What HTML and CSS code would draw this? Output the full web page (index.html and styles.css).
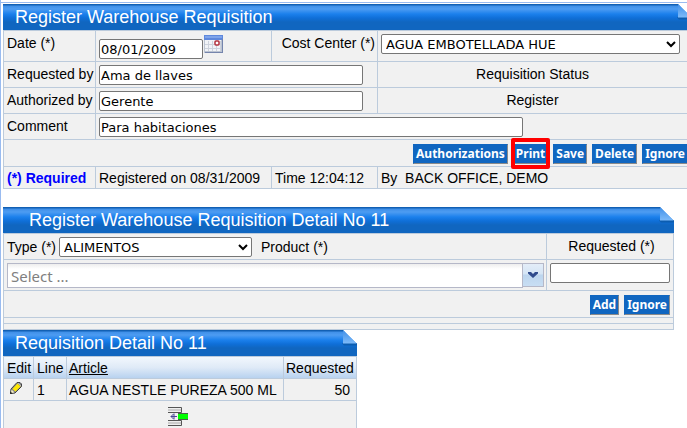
FILE: index.html
```html
<!DOCTYPE html>
<html lang="en">
<head>
<meta charset="UTF-8">
<meta name="viewport" content="width=device-width, initial-scale=1">
<title>Warehouse Requisition</title>
<link rel="stylesheet" href="styles.css">
</head>
<body>
<svg class="defs" width="0" height="0" aria-hidden="true">
  <defs>
    <linearGradient id="foldFill" x1="0" y1="0" x2="0" y2="1">
      <stop offset="0" stop-color="#3f8fe8"/>
      <stop offset="1" stop-color="#7dbaf9"/>
    </linearGradient>
    <symbol id="fold" viewBox="0 0 16 16">
      <path d="M2 0H16V14Z" fill="#fff"/>
      <path d="M1 13.500L3 15.500H16V13H2Z" fill="#0b559f" opacity=".7"/>
      <path d="M2 0V13.500H15.500Z" fill="url(#foldFill)"/>
    </symbol>
  </defs>
</svg>

<main class="page">
  <form class="panel requisition">
    <h1 class="title">Register Warehouse Requisition<svg class="fold"><use href="#fold"/></svg></h1>
    <div class="row first">
      <div class="cell"><label for="date">Date (*)</label></div>
      <div class="cell date-cell">
        <input type="text" id="date" class="date" value="08/01/2009">
        <button type="button" class="calendar" aria-label="Calendar">
          <svg width="19" height="18" viewBox="0 0 19 18">
            <rect x="0" y="0" width="19" height="18" fill="#bcc4d2"/>
            <rect x="1" y="5" width="16" height="11" fill="#f1f3f7"/>
            <rect x="0" y="0" width="19" height="5" fill="#5f88dc"/>
            <rect x="1" y="1" width="17" height="2" fill="#7fa4ea"/>
            <path d="M4.500 6v10M8.500 6v10M12.500 6v10M16.500 6v10M1 9.500h16M1 13.500h16" stroke="#cdd2dc"/>
            <path d="M18.500 4v14M1 17.500h18" stroke="#7585ad"/>
            <rect x="11" y="6" width="4" height="4" rx="1" fill="#fff" stroke="#b2303c" stroke-width="1.500"/>
          </svg>
        </button>
      </div>
      <div class="cell cost-label"><label for="cost">Cost Center (*)</label></div>
      <div class="cell cost-cell"><select id="cost" class="cost"><option>AGUA EMBOTELLADA HUE</option></select></div>
    </div>
    <div class="row">
      <div class="cell"><label for="requestedBy">Requested by</label></div>
      <div class="cell field wide"><input type="text" id="requestedBy" class="person" value="Ama de llaves"></div>
      <div class="cell status">Requisition Status</div>
    </div>
    <div class="row">
      <div class="cell"><label for="authorizedBy">Authorized by</label></div>
      <div class="cell field wide"><input type="text" id="authorizedBy" class="person" value="Gerente"></div>
      <div class="cell status">Register</div>
    </div>
    <div class="row">
      <div class="cell"><label for="comment">Comment</label></div>
      <div class="cell field full"><input type="text" id="comment" class="comment" value="Para habitaciones"></div>
    </div>
    <div class="actions">
      <button type="button" class="btn">Authorizations</button>
      <button type="button" class="btn marked">Print</button>
      <button type="button" class="btn">Save</button>
      <button type="button" class="btn">Delete</button>
      <button type="button" class="btn">Ignore</button>
    </div>
    <div class="row info">
      <div class="cell required">(*) Required</div>
      <div class="cell">Registered on 08/31/2009</div>
      <div class="cell">Time 12:04:12</div>
      <div class="cell">By &nbsp;BACK OFFICE, DEMO</div>
    </div>
  </form>

  <form class="panel entry">
    <h2 class="title indent">Register Warehouse Requisition Detail No 11<svg class="fold"><use href="#fold"/></svg></h2>
    <div class="entry-row">
      <div class="cell type-cell">
        <label for="type">Type (*)</label>
        <select id="type" class="type"><option>ALIMENTOS</option></select>
        <label for="product">Product (*)</label>
      </div>
      <div class="cell requested-label"><label for="requested">Requested (*)</label></div>
    </div>
    <div class="entry-row fields">
      <div class="cell combo-cell">
        <div class="combo">
          <input type="text" id="product" placeholder="Select ...">
          <button type="button" aria-label="Open list">
            <svg width="12" height="8" viewBox="0 0 12 8"><path d="M1 1H4L6 3L8 1H11V2.500L6 7L1 2.500Z" fill="#2f4a8c"/></svg>
          </button>
        </div>
      </div>
      <div class="cell amount-cell"><input type="text" id="requested" class="amount"></div>
    </div>
    <div class="actions">
      <button type="button" class="btn">Add</button>
      <button type="button" class="btn">Ignore</button>
    </div>
    <div class="strip"></div>
    <div class="strip"></div>
  </form>

  <section class="panel detail">
    <h2 class="title">Requisition Detail No 11<svg class="fold"><use href="#fold"/></svg></h2>
    <table class="lines">
      <thead>
        <tr><th class="edit">Edit</th><th class="line">Line</th><th><a href="#">Article</a></th><th class="qty">Requested</th></tr>
      </thead>
      <tbody>
        <tr>
          <td>
            <button type="button" class="icon" aria-label="Edit line">
              <svg width="14" height="14" viewBox="0 0 14 14">
                <path d="M1.500 12.500L2 8L8 1.500H11L12.500 3V5.500L6 12Z" fill="#888" stroke="#444"/>
                <path d="M3.500 8L8.500 2.500L11.500 5.500L6.500 10.500Z" fill="#ffe800"/>
                <path d="M2.500 8.500L5.500 11.500L2 12Z" fill="#f6efc4"/>
                <path d="M9 2L12 5" stroke="#bbb"/>
                <path d="M1 13L1.500 10.500L3.500 12.500Z" fill="#222"/>
              </svg>
            </button>
          </td>
          <td>1</td>
          <td>AGUA NESTLE PUREZA 500 ML</td>
          <td class="num">50</td>
        </tr>
      </tbody>
    </table>
    <div class="insert">
      <button type="button" class="icon" aria-label="Insert line">
        <svg width="20" height="19" viewBox="0 0 20 19">
          <path d="M0 .5H13.500V5.500H0M0 13.500H13.500V18.500H0" fill="#eee" stroke="#555"/>
          <path d="M0 3H13M0 16H13" stroke="#aaa"/>
          <rect x="10" y="6" width="10" height="7" fill="#4d5f4d"/>
          <rect x="10" y="7" width="10" height="5" fill="#0f0"/>
          <path d="M3 9.500H9M6 6.500L3 9.500L6 12.500M6 7V12" stroke="#4a4794" fill="none"/>
        </svg>
      </button>
    </div>
  </section>
</main>
</body>
</html>
```
FILE: styles.css
```css
* { box-sizing: border-box; }
body { margin: 0; background: #fff; color: #000; font: 14px/16px "Liberation Sans", Arial, sans-serif; overflow: hidden; }
.defs { position: absolute; }
.page { min-height: 100vh; border-left: 1px solid #99bbf0; padding: 2px 0 0 2px; }
.page::before { content: ""; display: block; height: 1px; background: #99bbf0; margin: 0 0 1px -2px; }

.panel { background: #f1f1f1; border-left: 1px solid #bccbdc; border-right: 1px solid #bccbdc; }
.requisition { margin: 0 -5px 18px 0; }
.entry { margin-right: 13px; }
.detail { width: 354px; }

.title { position: relative; height: 27px; margin: 0 -1px; padding-left: 12px; color: #fff; font-size: 18px; font-weight: normal; line-height: 26px; border-bottom: 1px solid #bccbdc;
  background: linear-gradient(#1260b4 0, #1260b4 1px, #3f8fe8 2px, #4d9cf2 5px, #1b80ec 10px, #0f6fd8 14px, #1066c0 18px, #1066c0 100%); }
.indent { padding-left: 26px; }
.fold { position: absolute; top: 0; right: 0; width: 16px; height: 16px; }

/* rows of the form */
.row { display: grid; grid-template-columns: 92px 176px 106px 1fr; min-height: 26px; border-bottom: 1px solid #bccbdc; }
.first { min-height: 31px; }
.info { min-height: 22px; }
.cell { padding: 4px 3px 2px; border-right: 1px solid #bccbdc; white-space: nowrap; }
.cell:last-child { border-right: 0; }
.info .cell { padding-top: 3px; }
.row .field { padding-top: 3px; }
.wide { grid-column: span 2; }
.full { grid-column: span 3; }
.status { text-align: center; }
.row .status { padding-right: 7px; }
.cost-label { text-align: right; padding-right: 2px; }
.cost-cell { padding: 3px; }
.required { color: #00f; font-weight: bold; }

input, select { display: block; height: 20px; border: 1px solid #767676; border-radius: 2px; background: #fff; color: #000; font: 13px "DejaVu Sans", Verdana, sans-serif; }
input { padding: 1px; }
.date-cell { display: flex; gap: 1px; }
.date { width: 104px; margin-top: 4px; }
.calendar, .icon { padding: 0; border: 0; background: none; height: 18px; }
.calendar svg, .icon svg { display: block; }
.person { width: 264px; }
.comment { width: 424px; }
.cost { width: 299px; }

.actions { display: flex; justify-content: flex-end; gap: 5px; height: 27px; padding: 4px 3px 0; border-bottom: 1px solid #bccbdc; }
.btn { position: relative; height: 20px; padding: 0 2px; border: 1px solid #1066c0; border-right-color: #8a8a8a; border-bottom-color: #8a8a8a; background: #1066c0; color: #fff; font: bold 12px/16px "Noto Sans", Tahoma, sans-serif; }
.marked::after { content: ""; position: absolute; inset: -7px -3px -6px; border: 4px solid #f00; border-radius: 2px; }

/* product entry */
.entry-row { display: grid; grid-template-columns: 1fr 126px; min-height: 26px; border-bottom: 1px solid #bccbdc; }
.fields { min-height: 31px; }
.type-cell { display: flex; align-items: center; padding: 3px 3px 2px; }
.type { width: 193px; margin: 0 9px 0 3px; }
.requested-label { text-align: center; }
.combo-cell, .amount-cell { padding: 3px 2px 2px 3px; }
.requested-label { padding-left: 6px; }
.combo { display: flex; height: 25px; }
.combo input { flex: 1; height: 25px; border: 1px solid #b5b8c8; border-radius: 0; padding: 0 3px; background: linear-gradient(#eee, #fff 5px); font: 15px "Noto Sans", Tahoma, sans-serif; }
.combo input::placeholder { color: #808080; }
.combo button { width: 21px; height: 24px; padding: 0; border: 1px solid #b5b8c8; border-left: 0; background: linear-gradient(#e3edf8, #d5e5f5 45%, #bcd5ee 50%, #c8def3); }
.combo svg { display: block; margin: auto; }
.amount { width: 120px; }
.strip { height: 6px; border-bottom: 1px solid #bccbdc; }

/* requisition lines */
.lines { width: 100%; border-collapse: separate; border-spacing: 0; table-layout: fixed; }
.lines th, .lines td { height: 22px; padding: 0 2px; border-right: 1px solid #bccbdc; border-bottom: 1px solid #bccbdc; font-weight: normal; text-align: left; white-space: nowrap; }
.lines th { background: linear-gradient(#f2f7fd, #dfeaf7 50%, #b8d2ef); }
.lines th:last-child, .lines td:last-child { border-right: 0; }
.lines th:first-child, .lines td:first-child, .lines td:nth-child(2), .lines th:nth-child(2) { padding-left: 3px; }
.lines .edit { width: 30px; }
.lines .line { width: 33px; }
.lines .qty { width: 72px; }
.lines .num { text-align: right; padding-right: 6px; }
.lines a { color: #000; }
.lines .icon { height: 14px; margin-left: 2px; }
.insert { display: flex; justify-content: center; padding: 6px 5px 12px 0; }
.insert .icon { height: 19px; }
```
